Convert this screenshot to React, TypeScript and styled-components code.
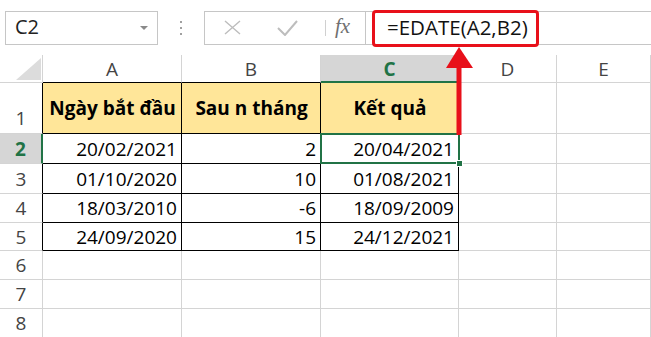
import React from 'react';
import styled, { createGlobalStyle } from 'styled-components';

const GRID = '#d4d4d4';
const GREEN = '#217346';
const RED = '#e8101a';
const FONT = "'Open Sans', 'Liberation Sans', sans-serif";

const GlobalStyle = createGlobalStyle`
  html, body {
    margin: 0;
    padding: 0;
    background: #fff;
  }
  body {
    font-family: ${FONT};
    overflow: hidden;
  }
`;

const headers = ['Ngày bắt đầu', 'Sau n tháng', 'Kết quả'];

const rows = [
  ['20/02/2021', '2', '20/04/2021'],
  ['01/10/2020', '10', '01/08/2021'],
  ['18/03/2010', '-6', '18/09/2009'],
  ['24/09/2020', '15', '24/12/2021'],
];

const columns = ['A', 'B', 'C', 'D', 'E'];

export default function App() {
  return (
    <Screen>
      <GlobalStyle />
      <FormulaBar>
        <NameBox>
          <span>C2</span>
          <Caret />
        </NameBox>
        <Grip>
          <i />
          <i />
          <i />
        </Grip>
        <FormulaBox>
          <IconSlot>
            <svg width="18" height="15" viewBox="0 0 18 15">
              <path d="M1 1 L16 14 M16 1 L1 14" stroke="#bdbdbd" strokeWidth="1.4" fill="none" />
            </svg>
          </IconSlot>
          <IconSlot>
            <svg width="21" height="16" viewBox="0 0 21 16">
              <path d="M1 8 L8 15 L20 1" stroke="#bdbdbd" strokeWidth="2" fill="none" />
            </svg>
          </IconSlot>
          <Divider />
          <Fx>fx</Fx>
          <InputArea>
            <Highlight>=EDATE(A2,B2)</Highlight>
          </InputArea>
        </FormulaBox>
      </FormulaBar>

      <Sheet>
        <Corner />
        {columns.map((c) => (
          <ColHead key={c} $active={c === 'C'} $table={c === 'A' || c === 'B'}>
            {c}
          </ColHead>
        ))}

        <RowHead $edge="table" $align="end">1</RowHead>
        {headers.map((h) => (
          <Cell key={h} $table $fill $bold $align="center">
            {h}
          </Cell>
        ))}
        <Cell />
        <Cell />

        {rows.map((r, i) => (
          <React.Fragment key={r[0]}>
            <RowHead $edge={i === 0 ? 'active' : 'table'} $active={i === 0}>
              {i + 2}
            </RowHead>
            {r.map((v, j) => (
              <Cell key={j} $table $align="right">
                {v}
                {i === 0 && j === 2 && (
                  <>
                    <Selection />
                    <FillHandle />
                  </>
                )}
              </Cell>
            ))}
            <Cell />
            <Cell />
          </React.Fragment>
        ))}

        {[6, 7, 8].map((n) => (
          <React.Fragment key={n}>
            <RowHead $edge="plain">{n}</RowHead>
            <Cell />
            <Cell />
            <Cell />
            <Cell />
            <Cell />
          </React.Fragment>
        ))}
      </Sheet>

      <Arrow width="30" height="92" viewBox="0 0 30 92">
        <polygon points="15,2 2,23 29,23" fill={RED} />
        <rect x="12.5" y="22" width="5" height="68" fill={RED} />
      </Arrow>
    </Screen>
  );
}

const Screen = styled.div`
  position: relative;
  width: 651px;
  height: 337px;
  overflow: hidden;
  background: #fff;
`;

const FormulaBar = styled.div`
  display: flex;
  align-items: center;
  height: 55px;
  padding-left: 5px;
  box-sizing: border-box;
`;

const NameBox = styled.div`
  box-sizing: border-box;
  width: 153px;
  height: 34px;
  border: 1px solid #c6c6c6;
  display: flex;
  align-items: center;
  justify-content: space-between;
  padding: 0 9px 2px 9px;
  font-size: 20px;
  color: #222;
`;

const Caret = styled.span`
  width: 0;
  height: 0;
  margin-top: 2px;
  border-left: 4px solid transparent;
  border-right: 4px solid transparent;
  border-top: 4px solid #8a8a8a;
`;

const Grip = styled.div`
  display: flex;
  flex-direction: column;
  gap: 4px;
  margin: 0 22px 0 22px;

  & > i {
    display: block;
    width: 2px;
    height: 2px;
    background: #a0a0a0;
  }
`;

const FormulaBox = styled.div`
  flex: 1;
  box-sizing: border-box;
  height: 34px;
  border: 1px solid #c6c6c6;
  border-right: none;
  display: flex;
  align-items: center;
  padding-left: 12px;
`;

const IconSlot = styled.div`
  width: 32px;
  display: flex;
  justify-content: center;
  margin-right: 22px;
`;

const Divider = styled.div`
  width: 1px;
  height: 16px;
  background: #d0d0d0;
`;

const Fx = styled.div`
  width: 39px;
  padding-left: 9px;
  box-sizing: border-box;
  font-family: 'Liberation Serif', serif;
  font-style: italic;
  font-size: 21px;
  color: #707070;
  margin-top: -3px;
`;

const InputArea = styled.div`
  flex: 1;
  align-self: stretch;
  border-left: 1px solid #c6c6c6;
  display: flex;
  align-items: center;
  padding-left: 6px;
`;

const Highlight = styled.div`
  box-sizing: border-box;
  width: 167px;
  height: 37px;
  margin-top: 1px;
  border: 3px solid ${RED};
  border-radius: 4px;
  background: #fff;
  padding: 0 0 2px 12px;
  display: flex;
  align-items: center;
  font-size: 20.5px;
  color: #111;
  white-space: nowrap;
`;

const Sheet = styled.div`
  display: grid;
  grid-template-columns: 43px 139px 139px 138px 98px 1fr;
  grid-template-rows: 28px 51px 30px 30px 29px 28px 29px 29px 29px;
  font-size: 19px;
`;

const Corner = styled.div`
  position: relative;
  box-sizing: border-box;
  border-right: 1px solid ${GRID};
  border-bottom: 1px solid ${GRID};

  &::after {
    content: '';
    position: absolute;
    right: 1px;
    bottom: 2px;
    width: 0;
    height: 0;
    border-left: 25px solid transparent;
    border-bottom: 22px solid #dcdcdc;
  }
`;

const ColHead = styled.div<{ $active?: boolean; $table?: boolean }>`
  box-sizing: border-box;
  display: flex;
  align-items: center;
  justify-content: center;
  border-right: 1px solid ${GRID};
  border-bottom: ${(p) =>
    p.$active ? `2px solid ${GREEN}` : `1px solid ${p.$table ? '#000' : GRID}`};
  background: ${(p) => (p.$active ? '#d6d6d6' : '#fff')};
  color: ${(p) => (p.$active ? GREEN : '#444')};
  font-weight: ${(p) => (p.$active ? 700 : 400)};
  padding-top: 1px;
`;

const RowHead = styled.div<{
  $edge: 'table' | 'active' | 'plain';
  $active?: boolean;
  $align?: 'end';
}>`
  box-sizing: border-box;
  display: flex;
  align-items: ${(p) => (p.$align === 'end' ? 'flex-end' : 'center')};
  justify-content: center;
  padding-bottom: ${(p) => (p.$align === 'end' ? '2px' : '0')};
  border-bottom: 1px solid ${GRID};
  border-right: ${(p) =>
    p.$edge === 'active'
      ? `2px solid ${GREEN}`
      : `1px solid ${p.$edge === 'table' ? '#000' : GRID}`};
  background: ${(p) => (p.$active ? '#d6d6d6' : '#fff')};
  color: ${(p) => (p.$active ? GREEN : '#444')};
  font-weight: ${(p) => (p.$active ? 700 : 400)};
`;

const Cell = styled.div<{
  $table?: boolean;
  $fill?: boolean;
  $bold?: boolean;
  $align?: 'center' | 'right';
}>`
  position: relative;
  box-sizing: border-box;
  display: flex;
  align-items: center;
  justify-content: ${(p) =>
    p.$align === 'right' ? 'flex-end' : p.$align === 'center' ? 'center' : 'flex-start'};
  padding: 0 4px 0 5px;
  border-right: 1px solid ${(p) => (p.$table ? '#000' : GRID)};
  border-bottom: 1px solid ${(p) => (p.$table ? '#000' : GRID)};
  background: ${(p) => (p.$fill ? '#ffe699' : '#fff')};
  color: #000;
  font-weight: ${(p) => (p.$bold ? 700 : 400)};
  white-space: nowrap;
`;

const Selection = styled.span`
  position: absolute;
  top: -1px;
  left: -1px;
  right: -2px;
  bottom: -1px;
  border: 2px solid ${GREEN};
  z-index: 2;
  pointer-events: none;
`;

const FillHandle = styled.span`
  position: absolute;
  right: -5px;
  bottom: -4px;
  width: 5px;
  height: 5px;
  background: ${GREEN};
  border: 1px solid #fff;
  z-index: 3;
`;

const Arrow = styled.svg`
  position: absolute;
  left: 444px;
  top: 45px;
  z-index: 5;
`;
